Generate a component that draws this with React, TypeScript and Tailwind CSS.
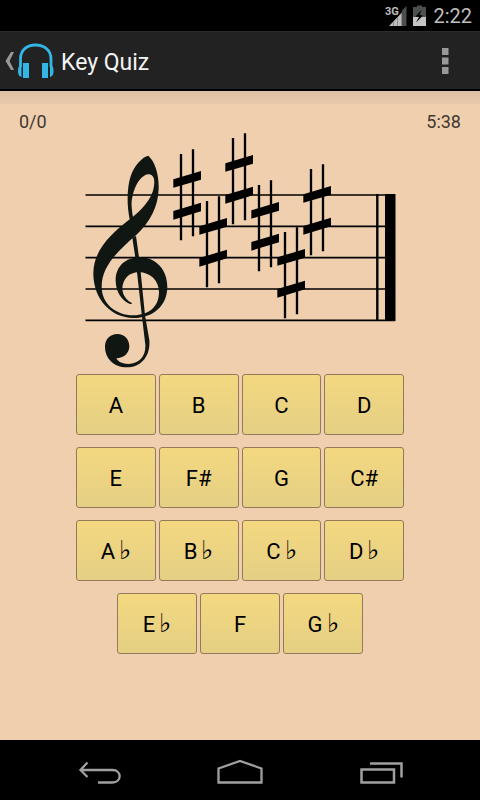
import React from 'react';

const KEY_ROWS = [
  ['A', 'B', 'C', 'D'],
  ['E', 'F#', 'G', 'C#'],
  ['A♭', 'B♭', 'C♭', 'D♭'],
];
const LAST_ROW = ['E♭', 'F', 'G♭'];

// x/y offset of each sharp, in the order they are written on the staff
const SHARPS = [
  [0, 0],
  [78, 141],
  [156, -48],
  [234, 93],
  [312, 234],
  [390, 45],
];

function StatusBar() {
  return (
    <div className="flex h-[31px] items-center justify-end bg-black pr-2 text-[#bebebe]">
      <svg width="24" height="24" viewBox="385 3 24 24" aria-label="3G signal">
        <text x="385" y="14" fontSize="11" fontWeight="700" fill="#bebebe" fontFamily="Roboto, sans-serif">
          3G
        </text>
        <path d="M406.500 5V25H402V9.500z" fill="#4c504c" />
        <path d="M389 25L402 11.500V25z" fill="#bebebe" />
        <path d="M393.500 20V25M397.500 16V25M401.500 12V25" stroke="#777" strokeWidth="0.700" />
      </svg>
      <svg className="ml-1" width="16" height="24" viewBox="413 3 16 24" aria-label="Battery charging">
        <path d="M413 6H417V4.500H422V6H426V25H413z" fill="#4c504c" />
        <path d="M413 16H426V25H413z" fill="#c4c4c4" />
        <path d="M421.500 9L415.500 15.500L419 16L416 21.500L423 14.500L419.500 14z" fill="#000" />
      </svg>
      <span className="ml-1 font-[Roboto,sans-serif] text-xl">2:22</span>
    </div>
  );
}

function ActionBar() {
  return (
    <header className="flex h-[60px] items-center border-t border-b-2 border-t-[#2c2c2c] border-b-black bg-[#222] pl-1">
      <a href="#back" aria-label="Back" className="flex items-center">
        <svg width="50" height="40" viewBox="4 41 50 40">
          <path d="M14 52H11L5.500 61L11 70H14L9.500 61z" fill="#999" />
          <path d="M20.500 67V59C20.500 50 27 45 35.500 45S51 50 51 59V67" fill="none" stroke="#33b5e5" strokeWidth="2.800" />
          <path d="M21.500 64V77C18.800 76.500 18 74 18 71C18 67 19 65 21.500 64z" fill="#33b5e5" />
          <path d="M50 64V77C52.700 76.500 53.500 74 53.500 71C53.500 67 52.500 65 50 64z" fill="#33b5e5" />
          <path d="M23 63H29V78H23zM42 63H48V78H42z" fill="#33b5e5" />
        </svg>
      </a>
      <h1 className="ml-[7px] flex-1 pt-1.5 text-[23px] text-[#f3f3f3]">Key Quiz</h1>
      <button type="button" aria-label="More options" className="mr-[23px] flex w-6 justify-center">
        <svg width="8" height="26" viewBox="0 0 8 26">
          <path d="M1 0H7.500V7H1zM1 9.500H7.500V16.500H1zM1 19H7.500V26H1z" fill="#999" />
        </svg>
      </button>
    </header>
  );
}

function Staff() {
  return (
    <svg className="mx-auto block" width="310" height="236" viewBox="85 133 310 236" overflow="visible" role="img" aria-label="Key signature with six sharps">
      <path
        d="M85.500 195H395M85.500 226.300H395M85.500 257.600H395M85.500 289H395M85.500 320.300H395"
        stroke="#000"
        strokeWidth="1.700"
      />
      <path d="M377.300 194V321" stroke="#000" strokeWidth="2.400" />
      <path d="M385 194H395.500V321H385z" />

      {/* treble clef */}
      <g transform="translate(80 140) scale(0.33333)" fill="#101612">
        <path
          fillRule="evenodd"
          d="M205 47C225 64 237 105 236 145C235 200 210 247 168 286C120 328 65 375 65 440C65 492 108 525 160 526C207 526 237 500 237 457C237 421 211 397 176 396C147 397 128 417 127 445C127 466 140 482 156 489C155 492 154 493 150 492C125 482 107 456 107 421C107 380 136 352 180 352C229 352 262 391 262 440C262 497 219 534 160 534C95 534 40 480 40 400C40 330 95 280 149 238C140 195 141 145 151 112C162 76 188 50 205 47zM159 230C197 199 223 165 223 126C223 110 215 102 203 103C172 110 153 165 155 200C156 212 157 222 159 230z"
        />
        <path d="M157 293L168 288L177 352L182 396L195 526L208 600C212 650 182 682 140 682C102 682 75 655 75 620C75 597 91 582 112 582C133 582 148 598 148 619C148 640 131 655 109 655C115 666 128 672 145 672C178 671 198 648 196 614L186 530L171 397L166 353z" />
      </g>

      <g transform="translate(160 125) scale(0.33333)">
        {SHARPS.map(([x, y]) => (
          <g key={x} transform={`translate(${x} ${y})`}>
            <path d="M63 87V346M99 73V334" stroke="#000" strokeWidth="7" />
            <path d="M40 163L123 138V164L40 188zM40 258L123 233V259L40 284z" />
          </g>
        ))}
      </g>
    </svg>
  );
}

function KeyButton({ label }: { label: string }) {
  const flat = label.endsWith('♭');
  return (
    <button
      type="button"
      className="flex h-[61px] flex-1 items-baseline justify-center gap-1 rounded-[3px] border border-[#94795a] bg-linear-to-b from-[#f4d880] to-[#e4cf84] pt-px text-[22px] leading-[59px] text-black"
    >
      <span>{label.replace('♭', '')}</span>
      {flat && <span className="text-[26px] leading-none">♭</span>}
    </button>
  );
}

function NavBar() {
  return (
    <nav className="flex h-[60px] items-center justify-around bg-black px-[30px] pt-[3px]">
      <button type="button" aria-label="Back">
        <svg width="44" height="28" viewBox="77 757 44 28" fill="none" stroke="#a0a0a0" strokeWidth="2.300">
          <path d="M87.500 761.500L80.500 769L87.500 776M81 769H112.500C122 769 122 781.500 112.500 781.500H98" />
        </svg>
      </button>
      <button type="button" aria-label="Home">
        <svg width="48" height="28" viewBox="216 757 48 28" fill="none" stroke="#a0a0a0" strokeWidth="2.300">
          <path d="M218.500 781.500V767.500L240 760L261.500 767.500V781.500z" />
        </svg>
      </button>
      <button type="button" aria-label="Recent apps">
        <svg width="44" height="28" viewBox="359 757 44 28" fill="none" stroke="#a0a0a0" strokeWidth="2.500">
          <path d="M361.500 768.500H394V781.500H361.500zM370 762.500H401.500V776.500" />
        </svg>
      </button>
    </nav>
  );
}

export default function App() {
  return (
    <div className="flex min-h-screen flex-col bg-[#f0cfaf] font-[Roboto,sans-serif]">
      <StatusBar />
      <ActionBar />
      <div className="h-[13px] bg-linear-to-b from-[#dfc0a2] to-[#e8c9aa]" />

      <main className="flex-1 pb-4">
        <div className="flex justify-between px-[19px] pt-[7px] text-[18px] leading-[22px] text-[#40382f]">
          <span>0/0</span>
          <span>5:38</span>
        </div>
        <Staff />

        <div className="mt-[5px] flex flex-col items-center gap-3">
          {KEY_ROWS.map((row) => (
            <div key={row[0]} className="flex w-[328px] gap-[3px]">
              {row.map((label) => (
                <KeyButton key={label} label={label} />
              ))}
            </div>
          ))}
          <div className="flex w-[246px] gap-[3px]">
            {LAST_ROW.map((label) => (
              <KeyButton key={label} label={label} />
            ))}
          </div>
        </div>
      </main>

      <NavBar />
    </div>
  );
}
